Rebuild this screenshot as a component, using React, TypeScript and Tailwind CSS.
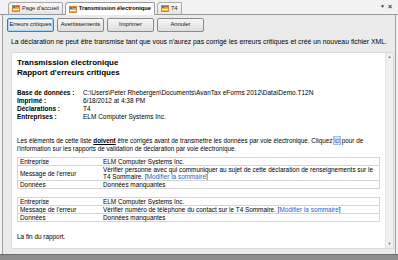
import React from "react";

function TabIcon() {
  return (
    <svg width="8" height="7" viewBox="0 0 8 7" className="shrink-0">
      <rect x="0.5" y="0.5" width="7" height="6" fill="#f3b23a" stroke="#c9781a" strokeWidth="0.8" />
      <rect x="1" y="1" width="2.5" height="2" fill="#3d7bd8" />
      <rect x="4" y="1.2" width="3" height="1" fill="#d83a2a" />
      <rect x="1" y="4" width="6" height="1" fill="#fff2c8" />
    </svg>
  );
}

function Tab({ label, active }: { label: string; active?: boolean }) {
  return (
    <div
      className={
        active
          ? "h-[13px] flex items-center gap-[2px] pl-[3px] pr-[3px] bg-white border border-b-0 border-[#9a9a9a] rounded-tl-[4px] rounded-tr-[2px] font-bold text-[5.7px] text-black relative -mb-px z-10"
          : "h-[12px] flex items-center gap-[2px] pl-[3px] pr-[3px] bg-gradient-to-b from-[#fbfbfb] to-[#e4e4e4] border border-b-0 border-[#a8a8a8] rounded-tl-[4px] rounded-tr-[2px] text-[5.7px] text-[#222]"
      }
    >
      <TabIcon />
      <span className="leading-none whitespace-nowrap">{label}</span>
    </div>
  );
}

function Btn({ label, focused }: { label: string; focused?: boolean }) {
  return (
    <div
      className={
        "w-[47px] h-[14px] flex items-center justify-center rounded-[2px] border text-[5.8px] text-[#111] bg-gradient-to-b from-[#f6f6f6] to-[#dedede] " +
        (focused ? "border-[#3c7fb1] shadow-[inset_0_0_0_1px_#a8d8f5]" : "border-[#8a8a8a]")
      }
    >
      <span className="leading-none whitespace-nowrap">{label}</span>
    </div>
  );
}

function Row({ a, children }: { a: string; children: React.ReactNode }) {
  return (
    <div className="flex border-t border-[#d4d4d4] first:border-t-0">
      <div className="w-[84px] shrink-0 pl-[2px] flex items-center">{a}</div>
      <div className="flex-1 pl-[1px] pr-[2px]">{children}</div>
    </div>
  );
}

function Link({ children }: { children: React.ReactNode }) {
  return <span className="text-[#2a5fc4] underline">{children}</span>;
}

export default function App() {
  return (
    <div className="w-[398px] h-[260px] overflow-hidden bg-[#f2f2f2] flex flex-col font-['Liberation_Sans',Arial,sans-serif] text-black">
      {/* tab strip */}
      <div className="h-[15px] shrink-0 flex items-end pl-[8px] gap-[2px] relative border-b border-[#9a9a9a]">
        <Tab label="Page d'accueil" />
        <Tab label="Transmission électronique" active />
        <Tab label="T4" />
        <div className="absolute right-[6px] top-[3px] flex items-center gap-[3px] text-[7px] leading-none text-[#333]">
          <span className="text-[5px]">▼</span>
          <span className="font-bold">×</span>
        </div>
      </div>

      {/* panel */}
      <div className="flex-1 flex flex-col bg-[#ebebeb] border-x border-[#a0a0a0] mx-[2px] pl-[3px] pr-[1px] min-h-0">
        <div className="flex gap-[3px] mt-[3px] ml-[1px]">
          <Btn label="Erreurs critiques" focused />
          <Btn label="Avertissements" />
          <Btn label="Imprimer" />
          <Btn label="Annuler" />
        </div>
        <div className="mt-[6px] ml-[5px] text-[6.85px] leading-[8px] whitespace-nowrap">
          La déclaration ne peut être transmise tant que vous n'aurez pas corrigé les erreurs critiques et créé un nouveau fichier XML.
        </div>

        {/* report box */}
        <div className="mt-[6px] ml-[5px] h-[197px] flex bg-white border border-[#dadada]">
          <div className="flex-1 pl-[5px] pr-[5px] pt-[5px] text-[6.4px] leading-[7px] overflow-hidden">
            <div className="font-bold text-[8px] leading-[10px]">
              <div>Transmission électronique</div>
              <div>Rapport d'erreurs critiques</div>
            </div>

            <div className="mt-[11px] leading-[8px] text-[6.5px]">
              <div className="flex">
                <div className="w-[66px] shrink-0 font-bold">Base de données :</div>
                <div className="whitespace-nowrap">C:\Users\Peter Rhebergen\Documents\AvanTax eForms 2012\Data\Demo.T12N</div>
              </div>
              <div className="flex">
                <div className="w-[66px] shrink-0 font-bold">Imprimé :</div>
                <div>6/18/2012 at 4:38 PM</div>
              </div>
              <div className="flex">
                <div className="w-[66px] shrink-0 font-bold">Déclarations :</div>
                <div>T4</div>
              </div>
              <div className="flex">
                <div className="w-[66px] shrink-0 font-bold">Entreprises :</div>
                <div>ELM Computer Systems Inc.</div>
              </div>
            </div>

            <div className="mt-[16px] leading-[8px] text-[6.3px] pr-[4px]">
              Les éléments de cette liste <b className="underline">doivent</b> être corrigés avant de transmettre les données par voie électronique. Cliquez{" "}
              <span className="text-[#2a5fc4] underline bg-[#d8e8fb] outline outline-1 outline-[#9cc0ec]">ici</span> pour de l'information sur les rapports de validation de déclaration par voie électronique.
            </div>

            <div className="mt-[4px] border border-[#d4d4d4] flex flex-col">
              <Row a="Entreprise">ELM Computer Systems Inc.</Row>
              <Row a="Message de l'erreur">
                Vérifier personne avec qui communiquer au sujet de cette déclaration de renseignements sur le T4 Sommaire. [<Link>Modifier la sommaire</Link>]
              </Row>
              <Row a="Données">Données manquantes</Row>
            </div>

            <div className="mt-[8px] border border-[#d4d4d4] flex flex-col">
              <Row a="Entreprise">ELM Computer Systems Inc.</Row>
              <Row a="Message de l'erreur">
                Vérifier numéro de téléphone du contact sur le T4 Sommaire. [<Link>Modifier la sommaire</Link>]
              </Row>
              <Row a="Données">Données manquantes</Row>
            </div>

            <div className="mt-[11px]">La fin du rapport.</div>
          </div>

          {/* scrollbar */}
          <div className="w-[8px] shrink-0 bg-[#f0f0f0] border-l border-[#e4e4e4] flex flex-col justify-between items-center text-[4px] text-[#777] leading-none py-[2px]">
            <span>▲</span>
            <span>▼</span>
          </div>
        </div>
        <div className="flex-1" />
      </div>
      <div className="h-[6px] shrink-0 bg-[#8e8e8e] border-t border-[#6e6e6e]" />
    </div>
  );
}
